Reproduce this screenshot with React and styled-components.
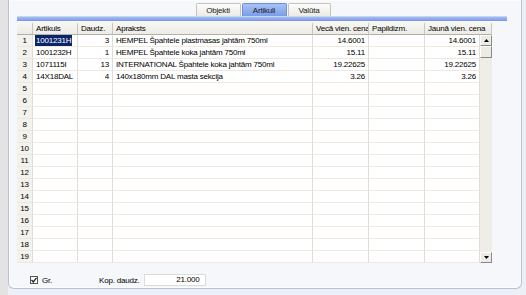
import styled, { createGlobalStyle } from "styled-components";

const GlobalStyle = createGlobalStyle`
    body {
        margin: 0;
        background: #e6e7ea;
        font-family: "Liberation Sans", Arial, sans-serif;
        font-size: 8px;
        letter-spacing: -0.2px;
        color: #000;
    }
`;

const justify = { left: "flex-start", center: "center", right: "flex-end" };

const columns = [
    { key: "nr", title: "", width: 16, align: "center" },
    { key: "code", title: "Artikuls", width: 45, align: "left" },
    { key: "qty", title: "Daudz.", width: 35, align: "right" },
    { key: "desc", title: "Apraksts", width: 200, align: "left" },
    { key: "oldPrice", title: "Vecā vien. cena", width: 56, align: "right" },
    { key: "extra", title: "Papildizm.", width: 56, align: "left" },
    { key: "newPrice", title: "Jaunā vien. cena", width: 55, align: "right" },
];

const items = [
    { code: "1001231H", qty: "3", desc: "HEMPEL Špahtele plastmasas jahtām 750ml", oldPrice: "14.6001", extra: "", newPrice: "14.6001" },
    { code: "1001232H", qty: "1", desc: "HEMPEL Špahtele koka jahtām 750ml", oldPrice: "15.11", extra: "", newPrice: "15.11" },
    { code: "1071115I", qty: "13", desc: "INTERNATIONAL Špahtele koka jahtām 750ml", oldPrice: "19.22625", extra: "", newPrice: "19.22625" },
    { code: "14X18DAL", qty: "4", desc: "140x180mm DAL masta sekcija", oldPrice: "3.26", extra: "", newPrice: "3.26" },
];

const rows = Array.from({ length: 19 }, (_, i) => ({ nr: String(i + 1), ...(items[i] || {}) }));

const Screen = styled.div`
    width: 526px;
    height: 295px;
    box-sizing: border-box;
    padding: 0 4px 6px 8px;
    display: flex;
    overflow: hidden;
    background: linear-gradient(90deg, #e3e3e3 0, #e3e3e3 8px, #eceff5 8px);
`;

const Panel = styled.div`
    flex: 1;
    display: flex;
    flex-direction: column;
    box-sizing: border-box;
    padding: 3px 14px 0 8px;
    background: #f5f7fb;
    border: 1px solid #b7c1d6;
    border-top: none;
    border-radius: 0 0 6px 6px;
    box-shadow: inset 0 0 0 1px #fbfcfe;
`;

const TabBar = styled.div`
    display: flex;
    justify-content: center;
    gap: 1px;
    padding-left: 2px;
`;

const Tab = styled.div`
    width: ${(p) => p.$w}px;
    height: 13px;
    box-sizing: border-box;
    display: flex;
    align-items: center;
    justify-content: center;
    border: 1px solid ${(p) => (p.$active ? "#6d8fdc" : "#c4c4bc")};
    border-bottom: none;
    border-radius: 2px 2px 0 0;
    background: ${(p) =>
        p.$active
            ? "linear-gradient(#a9c2f5, #7a9de9)"
            : "linear-gradient(#fdfdfb, #ebeae4)"};
    color: #1a1a1a;
`;

const BlueBar = styled.div`
    height: 4px;
    background: linear-gradient(#a7bdf1, #7896e4);
    border-top: 1px solid #c6d4f6;
`;

const Table = styled.div`
    margin-top: 2px;
    width: 475px;
    display: flex;
    flex-direction: column;
    background: #fff;
`;

const Row = styled.div`
    display: flex;
    height: 12px;
`;

const Body = styled.div`
    display: flex;
`;

const Rows = styled.div`
    display: flex;
    flex-direction: column;
`;

const HeadCell = styled.div`
    width: ${(p) => p.$w}px;
    flex: none;
    box-sizing: border-box;
    padding: 0 2px 0 3px;
    line-height: 11px;
    white-space: nowrap;
    overflow: hidden;
    background: linear-gradient(#f7f6f2, #ecebe5);
    border-right: 1px solid #c8c6bd;
    border-bottom: 1px solid #b2b0a7;
`;

const Cell = styled.div`
    width: ${(p) => p.$w}px;
    flex: none;
    display: flex;
    justify-content: ${(p) => justify[p.$align]};
    box-sizing: border-box;
    padding: ${(p) => (p.$align === "center" ? "0" : "0 3px")};
    line-height: 11px;
    white-space: nowrap;
    overflow: hidden;
    background: ${(p) => (p.$align === "center" ? "#f3f2ed" : "#fff")};
    border-right: 1px solid #e0ddd6;
    border-bottom: 1px solid #efe8e0;
`;

const Selected = styled.span`
    background: #0a246a;
    color: #fff;
    padding: 0 1px;
    margin-left: -1px;
`;

const ScrollBar = styled.div`
    width: 12px;
    display: flex;
    flex-direction: column;
    background: #eeede7;
`;

const ScrollButton = styled.div`
    height: 11px;
    box-sizing: border-box;
    display: flex;
    align-items: center;
    justify-content: center;
    background: #ecebe5;
    border: 1px solid;
    border-color: #fff #8a8983 #8a8983 #fff;
`;

const Thumb = styled(ScrollButton)`
    height: 12px;
`;

const Spacer = styled.div`
    flex: 1;
`;

const Footer = styled.div`
    display: flex;
    align-items: center;
    margin: 10px 0 0 13px;
    height: 14px;
`;

const CheckBox = styled.span`
    width: 8px;
    height: 8px;
    box-sizing: border-box;
    border: 1px solid #55534d;
    background: #fff;
    display: flex;
    align-items: center;
    justify-content: center;
`;

const Label = styled.span`
    margin-left: ${(p) => p.$ml}px;
`;

const Field = styled.div`
    margin-left: 4px;
    width: 62px;
    height: 12px;
    box-sizing: border-box;
    border: 1px solid #dcdcd6;
    background: #fff;
    text-align: right;
    padding-right: 5px;
    line-height: 10px;
`;

const Arrow = ({ up }) => (
    <svg width="5" height="3" viewBox="0 0 5 3">
        <path d={up ? "M0 3 L2.5 0 L5 3 Z" : "M0 0 L2.5 3 L5 0 Z"} fill="#000" />
    </svg>
);

const App = () => (
    <>
        <GlobalStyle />
        <Screen>
            <Panel>
                <TabBar>
                    <Tab $w={45}>Objekti</Tab>
                    <Tab $w={45} $active>Artikuli</Tab>
                    <Tab $w={43}>Valūta</Tab>
                </TabBar>
                <BlueBar />
                <Table>
                    <Row>
                        {columns.map((c, i) => (
                            <HeadCell key={c.key} $w={i === columns.length - 1 ? c.width + 12 : c.width}>
                                {c.title}
                            </HeadCell>
                        ))}
                    </Row>
                    <Body>
                        <Rows>
                            {rows.map((r, ri) => (
                                <Row key={ri}>
                                    {columns.map((c) => (
                                        <Cell key={c.key} $w={c.width} $align={c.align}>
                                            {ri === 0 && c.key === "code" ? (
                                                <Selected>{r[c.key]}</Selected>
                                            ) : (
                                                <span>{r[c.key]}</span>
                                            )}
                                        </Cell>
                                    ))}
                                </Row>
                            ))}
                        </Rows>
                        <ScrollBar>
                            <ScrollButton>
                                <Arrow up />
                            </ScrollButton>
                            <Thumb />
                            <Spacer />
                            <ScrollButton>
                                <Arrow />
                            </ScrollButton>
                        </ScrollBar>
                    </Body>
                </Table>
                <Footer>
                    <CheckBox>
                        <svg width="6" height="6" viewBox="0 0 6 6">
                            <path d="M0.5 3 L2.3 5 L5.5 0.8" stroke="#222" strokeWidth="1.3" fill="none" />
                        </svg>
                    </CheckBox>
                    <Label $ml={4}>Gr.</Label>
                    <Label $ml={47}>Kop. daudz.</Label>
                    <Field>21.000</Field>
                </Footer>
            </Panel>
        </Screen>
    </>
);

export default App;
